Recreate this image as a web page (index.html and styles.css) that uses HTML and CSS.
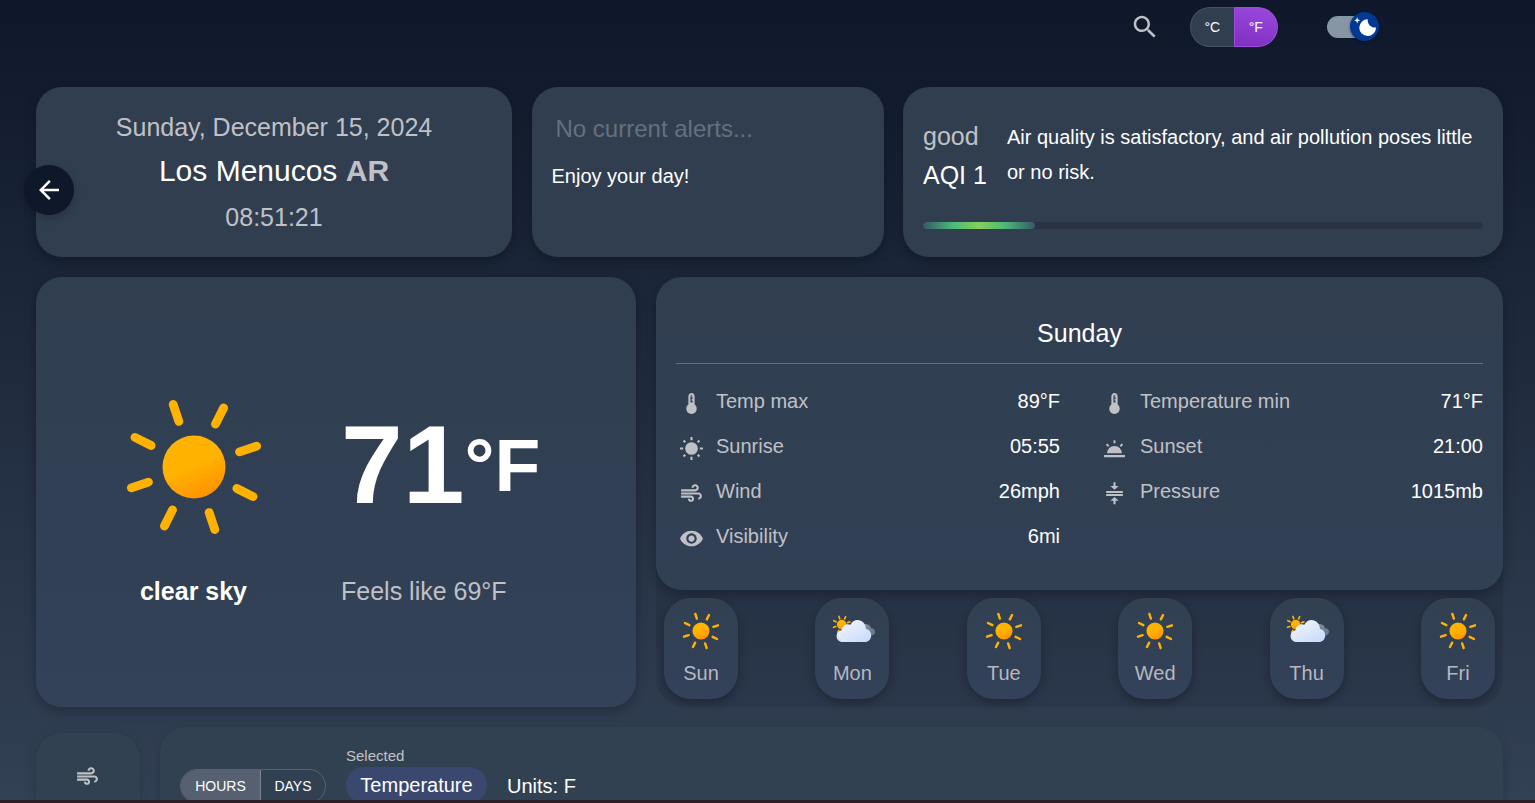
FILE: index.html
```html
<!DOCTYPE html>
<html lang="en">
<head>
<meta charset="utf-8">
<title>Weather</title>
<link rel="stylesheet" href="styles.css">
</head>
<body>
<svg class="defs" width="0" height="0">
  <defs>
    <linearGradient id="sunFill" x1=".3" y1="0" x2=".75" y2="1"><stop offset=".45" stop-color="#ffb300"/><stop offset="1" stop-color="#ff8f00"/></linearGradient>
    <linearGradient id="cloudFill" x1="0" y1="0" x2=".8" y2="1"><stop offset=".4" stop-color="#e6ecf8"/><stop offset="1" stop-color="#c8dcfd"/></linearGradient>
    <linearGradient id="darkCloud" x1="0" y1="0" x2="1" y2="1"><stop offset="0" stop-color="#8290a8"/><stop offset="1" stop-color="#66738c"/></linearGradient>
    <symbol id="sun" viewBox="0 0 140 140">
      <circle cx="70" cy="70" r="31.5" fill="url(#sunFill)"/>
      <g transform="rotate(-18.4 70 70)" stroke="#ffb300" stroke-width="8.8" stroke-linecap="round">
        <path d="M70 22V4M70 118v18M22 70H4M118 70h18M36.1 36.1 23.3 23.3M103.9 103.9l12.8 12.8M36.1 103.9l-12.8 12.8M103.9 36.1l12.8-12.8"/>
      </g>
    </symbol>
    <symbol id="cloudy" viewBox="0 0 44 30">
      <g transform="translate(9.7 9.6)"><circle r="4.8" fill="url(#sunFill)"/>
        <path transform="rotate(-18.4)" stroke="#ffb300" stroke-width="1.7" stroke-linecap="round" d="M0-6.2V-8.6M0 6.2v2.4M-6.2 0h-2.4M6.2 0h2.4M-4.5-4.5l-1.7-1.7M4.5-4.5l1.7-1.7M-4.5 4.5l-1.7 1.7"/></g>
      <path fill="url(#darkCloud)" d="M28 13c1-3 3.5-4.3 6-4 2.8.2 4.7 2 5.1 4.200 2.400.100 4 1.600 4 3.600 0 2.200-1.700 3.700-4 3.700H28z"/>
      <path fill="url(#cloudFill)" d="M10.700 27C7 27 4.600 24.400 4.600 21.200c0-3.200 2.200-5.400 5-5.900.2-3.800 3-6.100 6.100-6.100 1 0 1.900.2 2.700.6C19.800 6.800 22.400 5 25.500 5c4.600 0 8.300 3.500 8.500 8.900 3.200.4 5.200 3.100 5.200 6.500 0 3.800-2.800 6.600-6.400 6.600z"/>
    </symbol>
    <symbol id="thermo" viewBox="0 0 24 24"><path d="M15 13V5c0-1.660-1.340-3-3-3S9 3.340 9 5v8c-1.210.910-2 2.370-2 4 0 2.760 2.240 5 5 5s5-2.240 5-5c0-1.630-.790-3.090-2-4m-4-8c0-.550.450-1 1-1s1 .450 1 1h-1v1h1v2h-1v1h1v2h-2z"/></symbol>
    <symbol id="bright" viewBox="0 0 24 24"><circle cx="12" cy="12" r="6.100"/><path d="M11 1h2v3h-2zM11 20h2v3h-2zM1 11h3v2H1zM20 11h3v2h-3zM3.700 5.100l1.400-1.400 1.600 1.600-1.400 1.400zM17.300 5.300l1.600-1.600 1.400 1.400-1.600 1.600zM3.700 18.900l1.600-1.600 1.400 1.400-1.600 1.600zM17.300 18.700l1.400-1.400 1.600 1.600-1.400 1.400z"/></symbol>
    <symbol id="air" viewBox="0 0 24 24"><path d="M14.500 17c0 1.650-1.350 3-3 3s-3-1.350-3-3h2c0 .550.450 1 1 1s1-.450 1-1-.450-1-1-1H2v-2h9.500c1.650 0 3 1.350 3 3M19 6.500C19 4.570 17.430 3 15.500 3S12 4.570 12 6.500h2c0-.830.670-1.500 1.500-1.500s1.500.670 1.500 1.500S16.330 8 15.500 8H2v2h13.500c1.930 0 3.500-1.570 3.500-3.500m-.5 4.500H2v2h16.500c.830 0 1.500.670 1.500 1.500s-.670 1.500-1.500 1.500v2c1.930 0 3.500-1.570 3.500-3.500S20.430 11 18.500 11"/></symbol>
    <symbol id="eye" viewBox="0 0 24 24"><path d="M12 4.500C7 4.500 2.730 7.610 1 12c1.730 4.390 6 7.500 11 7.500s9.270-3.110 11-7.500c-1.730-4.390-6-7.500-11-7.500M12 17c-2.760 0-5-2.240-5-5s2.240-5 5-5 5 2.240 5 5-2.240 5-5 5m0-8c-1.660 0-3 1.340-3 3s1.340 3 3 3 3-1.340 3-3-1.340-3-3-3"/></symbol>
    <symbol id="sunset" viewBox="0 0 24 24"><path d="M2 18.300h20v2.200H2zM4.900 16.500C5 12.600 8 9.500 12 9.500s7 3.100 7.100 7zM11.100 4h1.800v3h-1.800zM3.700 8.500l1.300-1.300 2 2-1.300 1.300zM17 9.200l2-2 1.300 1.300-2 2z"/></symbol>
    <symbol id="press" viewBox="0 0 24 24"><path d="M8 19h3v3.300h2V19h3l-4-3.700zM16 4.700h-3V1.300h-2v3.400H8l4 3.700zM4 9.600h16v1.900H4zM4 12.500h16v1.900H4z"/></symbol>
  </defs>
</svg>

<header class="topbar">
  <svg class="search" viewBox="0 0 24 24"><path d="M15.500 14h-.790l-.280-.270C15.410 12.590 16 11.110 16 9.500 16 5.910 13.090 3 9.500 3S3 5.910 3 9.500 5.910 16 9.500 16c1.610 0 3.090-.590 4.230-1.570l.270.280v.790l5 4.990L20.490 19zm-6 0C7.010 14 5 11.990 5 9.500S7.010 5 9.500 5 14 7.010 14 9.500 11.990 14 9.500 14"/></svg>
  <div class="units"><button class="unit">°C</button><button class="unit unit-on">°F</button></div>
  <div class="switch"><span class="thumb"><svg viewBox="0 0 20 20"><path d="M4.200 2.500l-.7 1.800-1.800.7 1.800.7.7 1.800.6-1.800L6.700 5l-1.900-.7-.6-1.800zm15 8.300a6.700 6.700 0 11-6.600-6.600 5.800 5.800 0 006.600 6.600z"/></svg></span></div>
</header>

<main class="page">
  <section class="row row-top">
    <article class="card place">
      <button class="back"><svg viewBox="0 0 24 24"><path d="M20 11H7.830l5.590-5.590L12 4l-8 8 8 8 1.410-1.410L7.830 13H20z"/></svg></button>
      <p class="date">Sunday, December 15, 2024</p>
      <h1 class="city">Los Menucos <b>AR</b></h1>
      <p class="time">08:51:21</p>
    </article>
    <article class="card alerts">
      <p class="none">No current alerts...</p>
      <p class="enjoy">Enjoy your day!</p>
    </article>
    <article class="card air">
      <div class="air-body">
        <div class="aqi"><span class="good">good</span><span>AQI 1</span></div>
        <p class="air-text">Air quality is satisfactory, and air pollution poses little or no risk.</p>
      </div>
      <div class="meter"><div class="meter-fill" style="width:20%"></div></div>
    </article>
  </section>

  <section class="row row-mid">
    <article class="card now">
      <div class="now-sky"><svg class="big-sun"><use href="#sun"/></svg><b class="sky">clear sky</b></div>
      <div class="now-temp"><div class="temp">71<span class="deg">°F</span></div><span class="feels">Feels like 69°F</span></div>
    </article>
    <div class="forecast">
      <article class="card details">
        <h2 class="day-title">Sunday</h2>
        <div class="stats">
          <div class="stat"><svg><use href="#thermo"/></svg><span>Temp max</span><b>89°F</b></div>
          <div class="stat"><svg><use href="#thermo"/></svg><span>Temperature min</span><b>71°F</b></div>
          <div class="stat"><svg><use href="#bright"/></svg><span>Sunrise</span><b>05:55</b></div>
          <div class="stat"><svg><use href="#sunset"/></svg><span>Sunset</span><b>21:00</b></div>
          <div class="stat"><svg><use href="#air"/></svg><span>Wind</span><b>26mph</b></div>
          <div class="stat"><svg><use href="#press"/></svg><span>Pressure</span><b>1015mb</b></div>
          <div class="stat"><svg><use href="#eye"/></svg><span>Visibility</span><b>6mi</b></div>
        </div>
      </article>
      <div class="days">
        <div class="day"><svg class="day-sun"><use href="#sun"/></svg><span>Sun</span></div>
        <div class="day"><svg class="day-cloud"><use href="#cloudy"/></svg><span>Mon</span></div>
        <div class="day"><svg class="day-sun"><use href="#sun"/></svg><span>Tue</span></div>
        <div class="day"><svg class="day-sun"><use href="#sun"/></svg><span>Wed</span></div>
        <div class="day"><svg class="day-cloud"><use href="#cloudy"/></svg><span>Thu</span></div>
        <div class="day"><svg class="day-sun"><use href="#sun"/></svg><span>Fri</span></div>
      </div>
    </div>
  </section>

  <section class="row row-chart">
    <div class="card side"><svg><use href="#air"/></svg></div>
    <div class="card chart">
      <div class="range"><button class="range-btn range-on">HOURS</button><button class="range-btn">DAYS</button></div>
      <div class="selected"><span class="sel-label">Selected</span><span class="pill">Temperature</span></div>
      <span class="unit-text">Units: F</span>
    </div>
  </section>
</main>
<div class="edge"></div>
</body>
</html>
```
FILE: styles.css
```css
* { box-sizing: border-box; margin: 0; padding: 0; }
body {
  height: 803px;
  overflow: hidden;
  background: linear-gradient(#0f172a, #334155);
  font-family: "Liberation Sans", Arial, sans-serif;
  font-size: 20px;
  color: #fff;
}
svg { display: block; flex: none; }
.defs { position: absolute; }
button { font: inherit; color: inherit; background: none; border: 0; }

.topbar { height: 87px; padding: 7px 155px 0 0; display: flex; justify-content: flex-end; align-items: flex-start; }
.search { width: 30px; height: 30px; margin: 5px 30px 0 0; fill: #c0c1c6; }
.units { display: flex; width: 88px; height: 40px; border-radius: 20px; overflow: hidden; background: #303e50; margin-right: 49px; }
.unit { flex: 1; font-size: 14px; border: 1px solid #475364; border-right: 0; border-radius: 20px 0 0 20px; }
.unit-on { background: linear-gradient(15deg, #7e2fc0, #9a4add); border: 1px solid #a04bdd; border-radius: 0 20px 20px 0; }
.switch { width: 53px; height: 22px; margin-top: 9px; border-radius: 11px; position: relative; background: linear-gradient(90deg, #8796a5 43px, transparent 43px); }
.thumb { position: absolute; left: 23px; top: -4px; width: 29px; height: 29px; border-radius: 50%; background: #003892; display: grid; place-items: center; box-shadow: 0 1px 3px rgba(0,0,0,.4); }
.thumb svg { width: 25px; height: 25px; fill: #fff; }

.page { padding: 0 32px 0 36px; display: flex; flex-direction: column; gap: 20px; }
.row { display: flex; }
.card { border-radius: 26px; background: #303e50; box-shadow: 0 4px 12px rgba(0,0,0,.28); }

.row-top { height: 170px; display: grid; grid-template-columns: 476px 352px 600px; grid-template-rows: 170px; justify-content: space-between; }
.place { position: relative; text-align: center; padding-top: 25px; font-size: 25px; color: #c0c1c6; }
.date { line-height: 30px; }
.city { font-size: 30px; line-height: 34px; font-weight: 400; color: #fff; margin: 12px 0 14px; }
.city b { color: #c0c1c6; }
.time { line-height: 30px; }
.back { position: absolute; left: -12px; top: 78px; width: 50px; height: 50px; border-radius: 50%; background: #0f172a; display: grid; place-items: center; box-shadow: 0 3px 8px rgba(0,0,0,.2); }
.back svg { width: 30px; height: 30px; fill: #fff; }
.alerts { padding: 28px 20px; }
.none { font-size: 24px; line-height: 28px; padding-left: 4px; color: #65707f; }
.enjoy { line-height: 24px; margin-top: 21px; }
.air { padding: 32px 20px 20px; }
.air-body { display: flex; height: 103px; }
.aqi { width: 84px; display: flex; flex-direction: column; font-size: 25px; line-height: 30px; padding-top: 2px; gap: 9px; }
.good { color: #c0c1c6; }
.air-text { flex: 1; line-height: 35px; padding-top: 1px; }
.meter { height: 7px; border-radius: 4px; background: #2a3344; overflow: hidden; }
.meter-fill { height: 7px; border-radius: 4px; background: linear-gradient(90deg, #35596a, #4cb978 27%, #84d158 50%, #4cb978 73%, #35596a); }

.row-mid { height: 430px; justify-content: space-between; }
.now { width: 600px; display: flex; background: linear-gradient(#303e50, #334159); }
.now-sky { width: 315px; padding-top: 120px; display: flex; flex-direction: column; align-items: center; }
.big-sun { width: 140px; height: 140px; }
.sky { font-size: 25px; line-height: 30px; margin-top: 39px; }
.now-temp { padding-top: 126px; margin-left: -10px; }
.temp { display: flex; font-size: 111px; line-height: 124px; font-weight: 700; height: 173px; }
.deg { font-size: 75px; line-height: 124px; }
.feels { font-size: 25px; line-height: 30px; color: #c0c1c6; }

.forecast { width: 847px; border-radius: 30px; background: rgba(15,23,42,.12); display: flex; flex-direction: column; }
.details { height: 313px; padding: 41px 20px 0; background: linear-gradient(#303e50, #324055); }
.day-title { font-size: 25px; line-height: 30px; font-weight: 400; text-align: center; height: 46px; border-bottom: 1px solid #647080; }
.stats { display: grid; grid-template-columns: 384px 383px; grid-auto-rows: 45px; column-gap: 40px; padding-top: 15px; }
.stat { display: flex; align-items: center; }
.stat svg { width: 25px; height: 25px; margin: 3px 12px 0 3px; fill: #c0c1c6; }
.stat:nth-child(even) svg { margin: 3px 13px 0 2px; }
.stat span { color: #c0c1c6; }
.stat b { margin-left: auto; font-weight: 400; }
.days { display: flex; justify-content: space-between; padding: 8px; }
.day { width: 74px; height: 101px; border-radius: 27px; background: linear-gradient(#324052, #33415a); box-shadow: 0 4px 10px rgba(0,0,0,.28); display: flex; flex-direction: column; align-items: center; justify-content: space-between; padding: 14px 0 14px; color: #b5b8bf; line-height: 24px; }
.day-sun { width: 38px; height: 38px; }
.day-cloud { width: 44px; height: 30px; margin: 3px 0 0 3px; }

.row-chart { gap: 20px; align-items: flex-start; }
.row-chart .card { background: #324152; border-radius: 26px 26px 0 0; box-shadow: 0 4px 12px rgba(0,0,0,.18); }
.side { width: 104px; height: 70px; margin-top: 6px; display: flex; justify-content: center; padding-top: 31px; }
.side svg { width: 25px; height: 25px; margin-right: 1px; fill: #c0c1c6; }
.chart { flex: 1; height: 76px; padding: 18px 20px 0; display: flex; align-items: flex-start; }
.range { display: flex; width: 146px; height: 34px; margin-top: 24px; border: 1px solid #566272; border-radius: 17px; overflow: hidden; font-size: 14px; }
.range-btn { flex: 1; }
.range-on { flex: 0 0 80px; background: #566071; border-right: 1px solid #7a8492; }
.selected { margin-left: 20px; display: flex; flex-direction: column; align-items: flex-start; }
.sel-label { font-size: 15px; line-height: 22px; color: #c0c1c6; }
.pill { width: 141px; height: 36px; line-height: 36px; border-radius: 18px; background: #3a4870; text-align: center; }
.unit-text { margin: 28px 0 0 20px; line-height: 26px; }
.edge { position: fixed; left: 0; right: 0; bottom: 0; height: 3px; background: #2d1f28; }
```
